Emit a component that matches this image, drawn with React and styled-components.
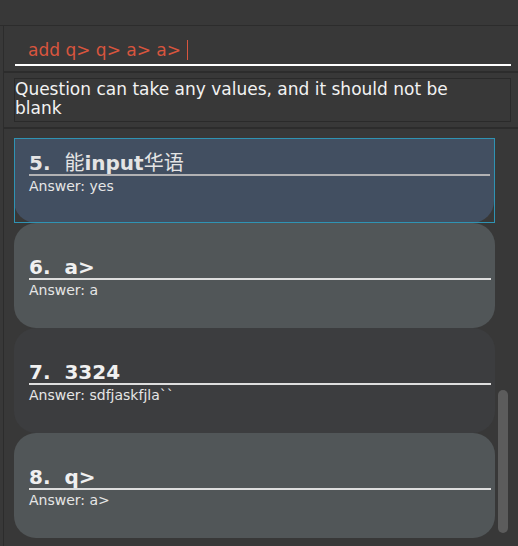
import React from 'react';
import styled, {createGlobalStyle} from "styled-components";

const GlobalStyle = createGlobalStyle`
  html, body {
    margin: 0;
    padding: 0;
    background: #383838;
    font-family: "DejaVu Sans", "Noto Sans CJK SC", sans-serif;
  }
  #root {
    height: 100vh;
    overflow: hidden;
  }
`;

const MenuBar = styled.div`
  height: 25px;
  border-bottom: 1px solid #2c2c2c;
  background: #383838;
`;

const Main = styled.div`
  margin-left: 3px;
  border-left: 1px solid #2c2c2c;
  height: calc(100vh - 26px);
  display: flex;
  flex-direction: column;
`;

const CommandArea = styled.div`
  padding: 14px 7px 5px 11px;
  border-bottom: 2px solid #2c2c2c;
`;

const CommandField = styled.div`
  padding: 0 0 4px 13px;
  border-bottom: 2px solid #ffffff;
  color: #d8553e;
  font-size: 17px;
  line-height: 20px;
  white-space: pre;
`;

const Caret = styled.span`
  display: inline-block;
  width: 0;
  height: 20px;
  margin-left: 6px;
  border-left: 1px solid #d8553e;
  vertical-align: top;
`;

const ResultArea = styled.div`
  padding: 5px 7px 5px 10px;
  border-bottom: 2px solid #2c2c2c;
`;

const ResultBox = styled.div`
  border: 1px solid #2a2a2a;
  padding: 1px 24px 3px 0;
  color: #f2f2f2;
  font-size: 17px;
  line-height: 19px;
`;

const ListPane = styled.div`
  flex: 1;
  display: flex;
  overflow: hidden;
`;

const CardColumn = styled.div`
  flex: none;
  width: 481px;
  padding: 9px 0 0 10px;
  display: flex;
  flex-direction: column;
`;

const SelectedCell = styled.div`
  height: 83px;
  border: 1px solid #2f93b3;
  overflow: hidden;
`;

const Card = styled.div`
  flex: none;
  height: 105px;
  box-sizing: border-box;
  padding: 33px 4px 0 15px;
  border-radius: 22px;
  background: ${p => p.$bg};
  margin-top: ${p => p.$shift || 0}px;
  margin-left: ${p => p.$shift ? -1 : 0}px;
`;

const Title = styled.div`
  font-size: 20px;
  line-height: 22px;
  font-weight: bold;
  color: ${p => p.$dim ? '#e4e4e4' : '#f0f0f0'};
  border-bottom: 2px solid ${p => p.$dim ? '#b2b2b4' : '#dedede'};
  white-space: pre;
`;

const Cjk = styled.span`
  font-weight: normal;
  font-family: "Noto Sans CJK SC", sans-serif;
`;

const Answer = styled.div`
  margin-top: 2px;
  font-size: 14px;
  line-height: 17px;
  color: #e6e6e6;
`;

const ScrollTrack = styled.div`
  flex: none;
  width: 10px;
  margin-left: 3px;
`;

const Thumb = styled.div`
  margin-top: 261px;
  height: 143px;
  border-radius: 5px;
  background: #5c5c5c;
`;

const cards = [
    {n: 7, q: '3324', a: 'sdfjaskfjla``', bg: '#3c3d3f'},
    {n: 8, q: 'q>', a: 'a>', bg: '#515658'},
];

export default function App() {
    return (
        <>
            <GlobalStyle/>
            <MenuBar/>
            <Main>
                <CommandArea>
                    <CommandField>add q&gt; q&gt; a&gt; a&gt;<Caret/></CommandField>
                </CommandArea>
                <ResultArea>
                    <ResultBox>Question can take any values, and it should not be blank</ResultBox>
                </ResultArea>
                <ListPane>
                    <CardColumn>
                        <SelectedCell>
                            <Card $bg="#424f61" $shift={-21}>
                                <Title $dim>{'5.  '}<Cjk>能</Cjk>input<Cjk>华语</Cjk></Title>
                                <Answer>Answer: yes</Answer>
                            </Card>
                        </SelectedCell>
                        <Card $bg="#515658">
                            <Title>{'6.  a>'}</Title>
                            <Answer>Answer: a</Answer>
                        </Card>
                        {cards.map(c =>
                            <Card key={c.n} $bg={c.bg}>
                                <Title>{`${c.n}.  ${c.q}`}</Title>
                                <Answer>Answer: {c.a}</Answer>
                            </Card>
                        )}
                    </CardColumn>
                    <ScrollTrack>
                        <Thumb/>
                    </ScrollTrack>
                </ListPane>
            </Main>
        </>
    );
}
